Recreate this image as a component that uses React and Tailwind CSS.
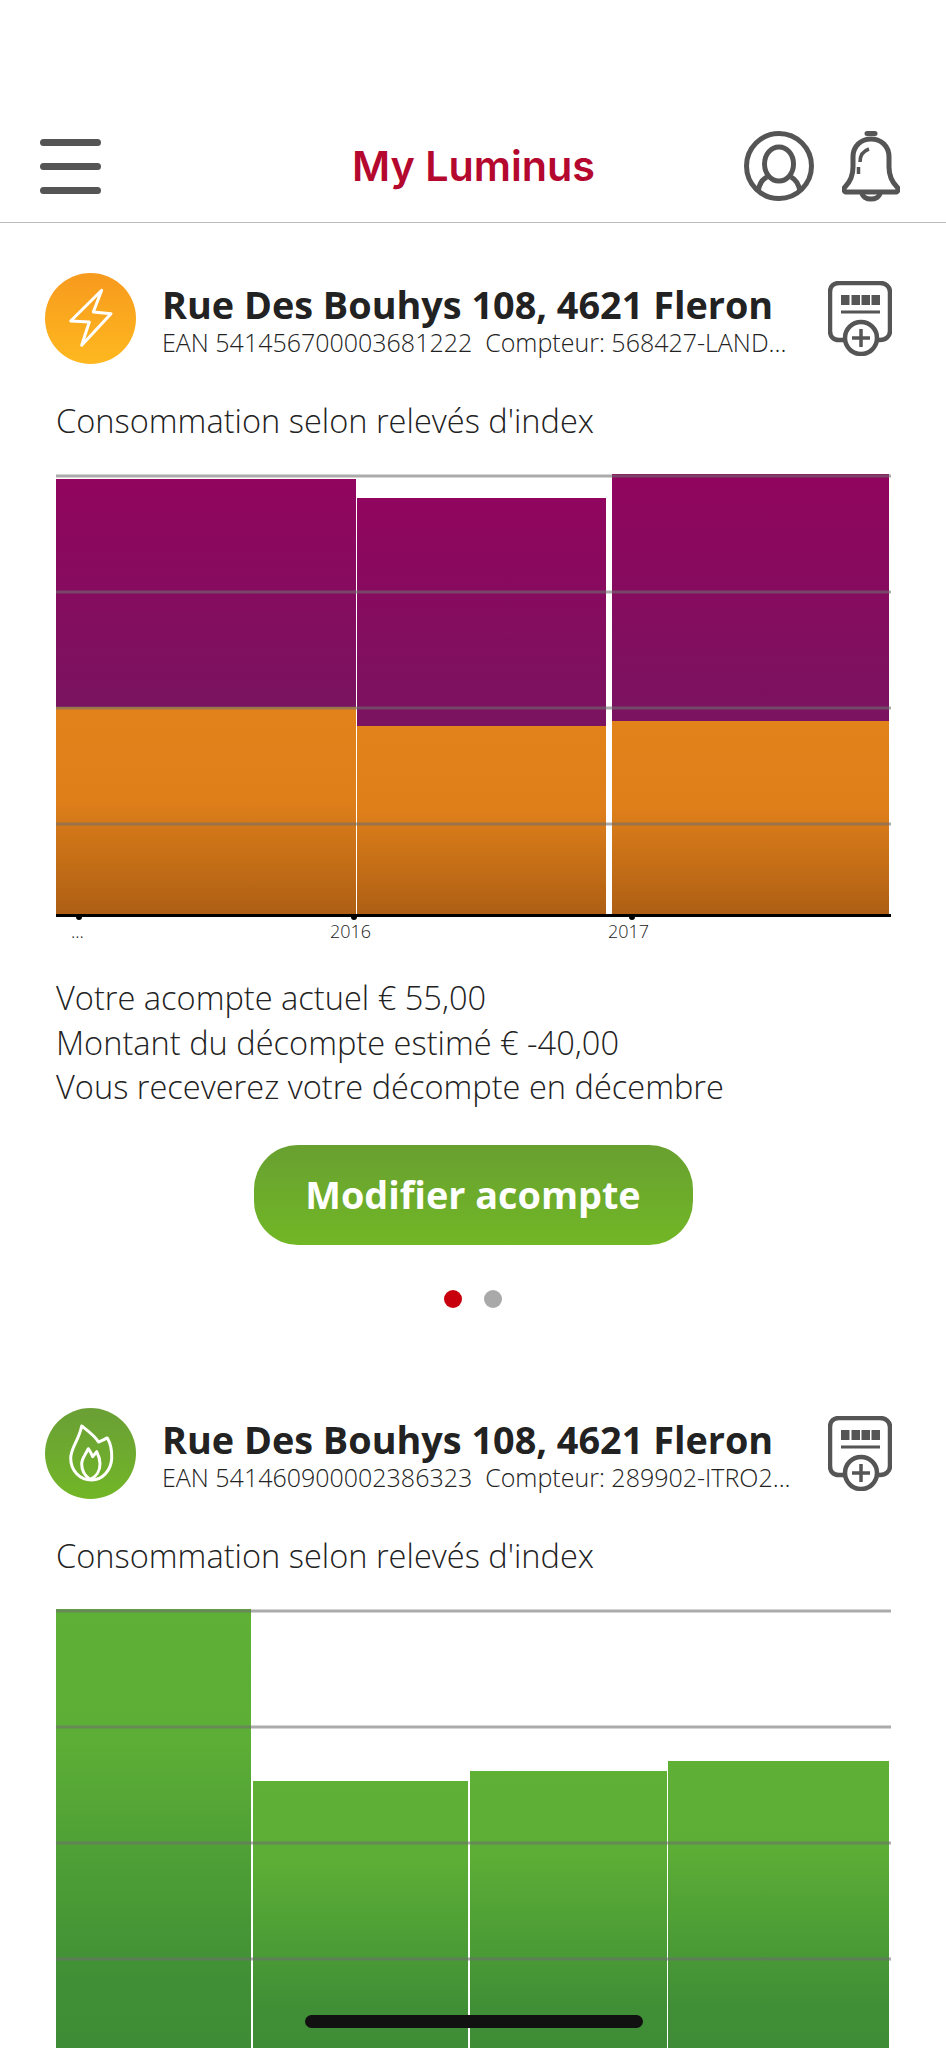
import React from 'react';

const grid = [1.5, 117.5, 233.5, 349.5];

function BarChart({ id, bars, height, axis }) {
  return (
    <svg width="836" height={height} viewBox={`0 0 836 ${height}`} className="block">
      <defs>
        <linearGradient id={`${id}-purple`} x1="0" y1="0" x2="0" y2="1">
          <stop offset="0" stopColor="#91055f" />
          <stop offset="1" stopColor="#7a1360" />
        </linearGradient>
        <linearGradient id={`${id}-orange`} x1="0" y1="0" x2="0" y2="1">
          <stop offset="0" stopColor="#e2821a" />
          <stop offset="0.45" stopColor="#de7f1a" />
          <stop offset="1" stopColor="#ae5f14" />
        </linearGradient>
        <linearGradient id={`${id}-green`} x1="0" y1="0" x2="0" y2="1">
          <stop offset="0" stopColor="#5eb135" />
          <stop offset="0.3" stopColor="#5cae36" />
          <stop offset="0.85" stopColor="#408f36" />
          <stop offset="1" stopColor="#3f8c36" />
        </linearGradient>
      </defs>
      {bars.map((b, i) => (
        <rect key={i} x={b.x} y={b.y} width={b.w} height={b.h} fill={`url(#${id}-${b.c})`} />
      ))}
      {grid.map((y) => (
        <rect key={y} x="0" y={y - 1} width="835" height="3" fill="#6f6f6f" fillOpacity="0.58" />
      ))}
      {axis && (
        <g fill="#000">
          <rect x="0" y="440" width="835" height="3" />
          <circle cx="23" cy="443" r="3" />
          <circle cx="298" cy="443" r="3" />
          <circle cx="576" cy="443" r="3" />
        </g>
      )}
    </svg>
  );
}

function AccountIcon() {
  return (
    <svg width="70" height="70" viewBox="0 0 70 70" fill="none" stroke="#555" strokeWidth="5">
      <circle cx="35" cy="35" r="32.5" />
      <ellipse cx="35" cy="33" rx="14.5" ry="17" />
      <path d="M14 61C15 53 19 48 23 46M56 61C55 53 51 48 47 46" />
    </svg>
  );
}

function BellIcon() {
  return (
    <svg width="58" height="71" viewBox="0 0 58 71" fill="none" stroke="#555" strokeWidth="5" strokeLinecap="round" strokeLinejoin="round">
      <path d="M25 2.5H33" strokeWidth="5" />
      <path d="M5 61H53C56 61 57 58 55 56C49 50 47 44 47 36V26C47 15 39 8 29 8C19 8 11 15 11 26V36C11 44 9 50 3 56C1 58 2 61 5 61Z" />
      <path d="M20 62C21 70 37 70 38 62" />
      <path d="M27 18C21 20 18 24 18 31" strokeWidth="3.5" strokeLinecap="butt" />
      <path d="M16.5 36V43" strokeWidth="3.5" strokeLinecap="butt" />
    </svg>
  );
}

function MeterIcon() {
  return (
    <svg width="64" height="75" viewBox="0 0 64 75" fill="none" stroke="#555" strokeWidth="4.5">
      <path d="M16 59H11C5 59 2 55 2 50V11C2 5 6 2 11 2H52C58 2 62 6 62 11V50C62 55 58 59 52 59H50" />
      <circle cx="33" cy="57" r="16" />
      <path d="M33 48V66M24 57H42" strokeWidth="3.5" />
      <path d="M13 31H52" strokeWidth="3" />
      <g fill="#555" stroke="none">
        <rect x="13" y="14" width="8.5" height="10" />
        <rect x="23.5" y="14" width="8.5" height="10" />
        <rect x="33.5" y="14" width="8.5" height="10" />
        <rect x="43.5" y="14" width="8.5" height="10" />
      </g>
    </svg>
  );
}

function BoltIcon() {
  return (
    <svg width="91" height="91" viewBox="0 0 91 91" fill="none" stroke="#fff" strokeWidth="3" strokeLinejoin="round">
      <path d="M56.7 17.3L25.7 48L44.3 49L36.7 72.3L66 40.7L48.3 39Z" />
    </svg>
  );
}

function FlameIcon() {
  return (
    <svg width="91" height="91" viewBox="0 0 91 91" fill="none" stroke="#fff" strokeWidth="3" strokeLinejoin="round">
      <path d="M36.7 18C43 23 50 28 53.5 34C56 33 60 31 62.3 30C66 36 67 43 66.7 50.7C66 62 58 72 46.7 72C34 72 25.7 62 25.7 50C25.7 40 34 32 36.7 18Z" />
      <path d="M45 71.5C40 68 36.7 62 36.7 56C36.7 50 41 46 43.3 40.7C45 43 46.5 46 47.7 48.7C49 47 50.5 45 51.7 43.7C54 48 55 52 55 56C55 63 51 69 45 71.5Z" />
    </svg>
  );
}

function AddressHeader({ circle, icon, ean, meter }) {
  return (
    <div className="flex h-[91px] items-center pl-[45px]">
      <div className={`-mt-[1px] flex h-[91px] w-[91px] shrink-0 items-center justify-center rounded-full ${circle}`}>
        {icon}
      </div>
      <div className="ml-[27px] w-[638px] shrink-0 pt-[5px]">
        <div className="-ml-[1px] whitespace-nowrap text-[37.8px] leading-[40px] font-bold text-[#222]">Rue Des Bouhys 108, 4621 Fleron</div>
        <div className="-ml-[1px] mt-[2px] whitespace-nowrap text-[25px] leading-[30px] font-light text-[#222]">
          {`EAN ${ean}\u00a0\u00a0Compteur: ${meter}`}
        </div>
      </div>
      <div className="ml-[27px]">
        <MeterIcon />
      </div>
    </div>
  );
}

const elecBars = [
  { x: 0, y: 5, w: 300, h: 228, c: 'purple' },
  { x: 301, y: 24, w: 249, h: 228, c: 'purple' },
  { x: 556, y: 0, w: 277, h: 247, c: 'purple' },
  { x: 0, y: 233, w: 300, h: 207, c: 'orange' },
  { x: 301, y: 252, w: 249, h: 188, c: 'orange' },
  { x: 556, y: 247, w: 277, h: 193, c: 'orange' },
];

const gasBars = [
  { x: 0, y: 0, w: 195, h: 440, c: 'green' },
  { x: 197, y: 172, w: 215, h: 268, c: 'green' },
  { x: 414, y: 162, w: 197, h: 278, c: 'green' },
  { x: 612, y: 152, w: 221, h: 288, c: 'green' },
];

export default function App() {
  return (
    <div className="relative h-[2048px] w-[946px] overflow-hidden bg-white font-['Open_Sans',sans-serif]">
      <header className="flex h-[223px] items-start border-b border-[#bbb] pt-[131px]">
        <div className="flex h-[70px] w-full items-center pl-[40px] pr-[46px]">
          <div className="flex w-[61px] flex-col gap-[17px]">
            <span className="h-[7px] rounded-full bg-[#555]" />
            <span className="h-[7px] rounded-full bg-[#555]" />
            <span className="h-[7px] rounded-full bg-[#555]" />
          </div>
          <h1 className="ml-[251px] mt-[1px] whitespace-nowrap font-['Inter',sans-serif] text-[41.3px] font-semibold text-[#b5082f]">My Luminus</h1>
          <div className="ml-auto flex items-center gap-[28px]">
            <AccountIcon />
            <BellIcon />
          </div>
        </div>
      </header>

      <section className="h-[1135px] pt-[50px]">
        <AddressHeader
          circle="bg-gradient-to-b from-[#f79a1e] to-[#feb81f]"
          icon={<BoltIcon />}
          ean="541456700003681222"
          meter="568427-LAND..."
        />
        <div className="px-[56px]">
          <p className="mt-[35px] text-[32.6px] leading-[44px] font-light text-[#222]">Consommation selon relevés d'index</p>
          <div className="mt-[31px]">
            <BarChart id="elec" bars={elecBars} height={447} axis />
          </div>
          <div className="h-[20px] text-[18px] leading-[20px] font-light text-[#222]">
            <div className="flex">
              <span className="ml-[15px] w-[259px]">...</span>
              <span className="w-[278px]">2016</span>
              <span>2017</span>
            </div>
          </div>
          <div className="mt-[35px] text-[32.6px] leading-[44.5px] font-light text-[#222]">
            <p>Votre acompte actuel € 55,00</p>
            <p>Montant du décompte estimé € -40,00</p>
            <p>Vous receverez votre décompte en décembre</p>
          </div>
        </div>
        <button className="mx-auto mt-[35px] flex h-[100px] w-[439px] items-center justify-center rounded-[44px] bg-gradient-to-b from-[#68a030] to-[#72b725] pt-[2px] text-[37.8px] font-bold text-white">
          Modifier acompte
        </button>
        <div className="mt-[45px] flex justify-center gap-[22px]">
          <span className="h-[18px] w-[18px] rounded-full bg-[#c8000e]" />
          <span className="h-[18px] w-[18px] rounded-full bg-[#a9a9a9]" />
        </div>
      </section>

      <section className="pt-[50px]">
        <AddressHeader
          circle="bg-gradient-to-b from-[#6a9f35] to-[#72b626]"
          icon={<FlameIcon />}
          ean="541460900002386323"
          meter="289902-ITRO2..."
        />
        <div className="px-[56px]">
          <p className="mt-[35px] text-[32.6px] leading-[44px] font-light text-[#222]">Consommation selon relevés d'index</p>
          <div className="mt-[31px]">
            <BarChart id="gas" bars={gasBars} height={446} />
          </div>
        </div>
      </section>

      {/* home indicator floats over the scrolling content */}
      <div className="absolute bottom-[20px] left-[305px] h-[13px] w-[338px] rounded-full bg-[#111]" />
    </div>
  );
}
